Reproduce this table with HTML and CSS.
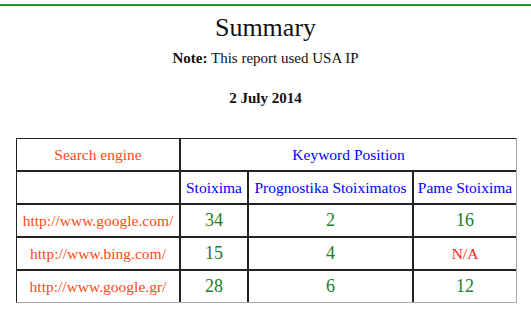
FILE: index.html
```html
<!DOCTYPE html>
<html>
<head>
<meta charset="utf-8">
<link rel="stylesheet" href="styles.css">
</head>
<body>
<div class="rule"></div>
<h1 class="title">Summary</h1>
<p class="note"><b>Note:</b> This report used USA IP</p>
<p class="date">2 July 2014</p>
<table class="report">
  <colgroup>
    <col class="c1"><col class="c2"><col class="c3"><col class="c4">
  </colgroup>
  <tr>
    <td class="engine-head">Search engine</td>
    <td class="kw" colspan="3">Keyword Position</td>
  </tr>
  <tr>
    <td></td>
    <td class="kw">Stoixima</td>
    <td class="kw">Prognostika Stoiximatos</td>
    <td class="kw">Pame Stoixima</td>
  </tr>
  <tr>
    <td class="engine">http://www.google.com/</td>
    <td class="num">34</td>
    <td class="num">2</td>
    <td class="num">16</td>
  </tr>
  <tr>
    <td class="engine">http://www.bing.com/</td>
    <td class="num">15</td>
    <td class="num">4</td>
    <td class="na">N/A</td>
  </tr>
  <tr>
    <td class="engine">http://www.google.gr/</td>
    <td class="num">28</td>
    <td class="num">6</td>
    <td class="num">12</td>
  </tr>
</table>
</body>
</html>
```

FILE: styles.css
```css
html, body {
  margin: 0;
  padding: 0;
  background: #ffffff;
}
body {
  font-family: "Liberation Serif", "DejaVu Serif", serif;
  color: #111111;
}
.rule {
  margin-top: 4px;
  height: 2px;
  background: #1c9a24;
}
.title {
  margin: 7px 0 0;
  font-size: 26px;
  line-height: 30px;
  font-weight: normal;
  text-align: center;
}
.note {
  margin: 6px 0 0;
  font-size: 15px;
  line-height: 18px;
  text-align: center;
}
.date {
  margin: 22px 0 0;
  font-size: 15px;
  line-height: 18px;
  font-weight: bold;
  text-align: center;
}
.report {
  margin: 31px 0 0 16px;
  width: 501px;
  table-layout: fixed;
  border-collapse: separate;
  border-spacing: 0;
  border: 1px solid;
  border-color: #222222 #aaaaaa #aaaaaa #222222;
}
.c1 { width: 163px; }
.c2 { width: 68px; }
.c3 { width: 165px; }
.c4 { width: 103px; }
.report td {
  border: 1px solid #222222;
  height: 31px;
  padding: 0;
  text-align: center;
  vertical-align: middle;
  font-size: 15.5px;
  white-space: nowrap;
  overflow: hidden;
}
.report tr:first-child td { border-top: 0; }
.report tr:last-child td { border-bottom: 0; }
.report td:first-child { border-left: 0; }
.report td:last-child { border-right: 0; }
.engine-head, .engine {
  color: #ff4a12;
}
.kw {
  color: #0000ff;
}
.report td.num {
  color: #1e7d1e;
  font-size: 18px;
}
.na {
  color: #ff1a1a;
}
```
